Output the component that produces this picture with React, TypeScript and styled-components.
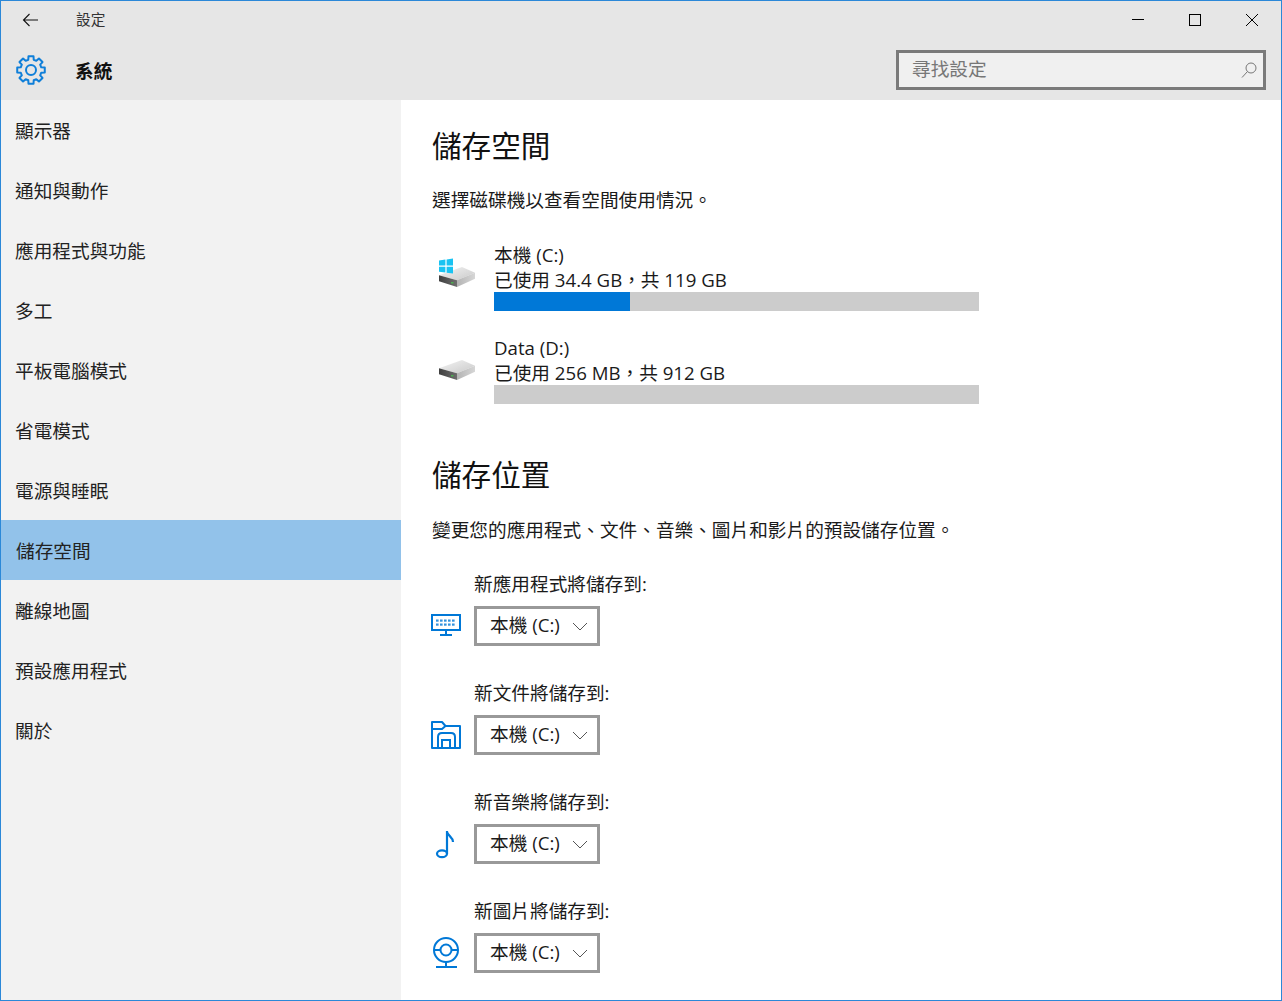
import React from "react";
import styled, { createGlobalStyle } from "styled-components";

const FONT = `"Open Sans", "Noto Sans CJK TC", sans-serif`;

const Global = createGlobalStyle`
  html, body { margin: 0; padding: 0; background: #fff; }
  * { box-sizing: border-box; }
`;

const Window = styled.div`
  width: 1282px; height: 1001px; border: 1px solid #2b88d8; overflow: hidden;
  display: flex; flex-direction: column; font-family: ${FONT}; font-size: 18.67px; color: #1a1a1a; background: #fff;
`;
const Header = styled.header`height: 99px; background: #e6e6e6; flex: none;`;
const TitleRow = styled.div`height: 37px; display: flex; align-items: center;`;
const BackButton = styled.div`width: 75px; padding-left: 21px; display: flex; align-items: center; height: 100%;`;
const AppTitle = styled.div`font-size: 14.67px; color: #333; flex: 1; padding-bottom: 2px;`;
const WinControls = styled.div`display: flex; height: 100%; margin-right: 1px;`;
const WinButton = styled.div`width: 57px; display: flex; align-items: center; justify-content: center;`;
const SearchRow = styled.div`height: 62px; padding: 2px 15px 0; display: flex; align-items: center;`;
const SectionTitle = styled.div`margin-left: 29px; font-weight: 700; font-size: 18.67px; color: #111; padding-bottom: 2px;`;
const SearchBox = styled.div`
  margin-left: auto; width: 370px; height: 40px; border: 3px solid #7a7a7a; background: #f0f0f0;
  display: flex; align-items: center; justify-content: space-between; padding: 0 6px 0 13px; color: #777;
`;
const SearchText = styled.span`padding-bottom: 5px;`;
const Body = styled.div`flex: 1; display: flex; min-height: 0;`;
const Sidebar = styled.nav`width: 400px; background: #f2f2f2; flex: none;`;
const NavItem = styled.div<{ $active?: boolean }>`
  height: 60px; display: flex; align-items: center; padding: 0 0 2px ${p => (p.$active ? 15 : 14)}px;
  background: ${p => (p.$active ? "#92c2ea" : "transparent")}; color: #222;
`;
const Main = styled.main`flex: 1; padding: 26px 0 0 31px; overflow: hidden;`;
const H1 = styled.h1<{ $top?: number }>`
  margin: ${p => p.$top ?? 0}px 0 0; font-size: 29.6px; font-weight: 400; line-height: 40px; color: #111;
`;
const Desc = styled.p<{ $top: number }>`margin: ${p => p.$top}px 0 0; line-height: 24px;`;
const DriveList = styled.div`margin-top: 32px; display: flex; flex-direction: column; gap: 26px;`;
const Drive = styled.div`display: grid; grid-template-columns: 62px 485px;`;
const DriveIconCell = styled.div`padding: 12px 0 0 7px;`;
const DriveName = styled.div`height: 24px; line-height: 22px; white-space: nowrap;`;
const Line = styled.div`line-height: 24px; white-space: nowrap;`;
const Track = styled.div`height: 19px; background: #cccccc;`;
const Fill = styled.div`height: 100%; background: #0078d7;`;
const Pickers = styled.div`margin-top: 30px; display: flex; flex-direction: column; gap: 35px;`;
const Picker = styled.div`display: grid; grid-template-columns: 42px auto; justify-content: start; row-gap: 10px;`;
const PickerLabel = styled.div`grid-column: 2; line-height: 24px;`;
const PickerIcon = styled.div`display: flex; align-items: center; margin-left: -1px;`;
const Select = styled.div`
  width: 126px; height: 40px; border: 3px solid #999; display: flex; align-items: center;
  justify-content: space-between; padding: 0 9px 0 13px; background: #fff; white-space: nowrap;
`;
const SelectText = styled.span`padding-bottom: 6px;`;
const ChevronMark = styled.svg`margin-top: 1px;`;

const Gear = () => {
  const teeth = 8, c = 15, ro = 14, ri = 10.6;
  let d = "";
  for (let i = 0; i < teeth; i++) {
    const a = (i * 2 * Math.PI) / teeth - Math.PI / 2;
    const w = Math.PI / teeth;
    const pts = [[ri, a - w * 0.66], [ro, a - w * 0.46], [ro, a + w * 0.46], [ri, a + w * 0.66]];
    pts.forEach(([r, t], j) => {
      d += `${i === 0 && j === 0 ? "M" : "L"}${(c + r * Math.cos(t)).toFixed(2)} ${(c + r * Math.sin(t)).toFixed(2)}`;
    });
  }
  return (
    <svg width="30" height="30" viewBox="0 0 30 30" fill="none" stroke="#0f7fd9" strokeWidth="2" strokeLinejoin="round">
      <path d={d + "Z"} />
      <circle cx="15" cy="15" r="5" />
    </svg>
  );
};

const DriveGraphic = ({ windows }: { windows?: boolean }) => (
  <svg width="38" height="33" viewBox="0 0 38 33" style={{ display: "block" }}>
    <defs>
      <linearGradient id="driveTop" x1="0" y1="0" x2="1" y2="1">
        <stop offset="0" stopColor="#f4f4f4" />
        <stop offset="1" stopColor="#c9c9c9" />
      </linearGradient>
      <linearGradient id="driveFront" x1="0" y1="0" x2="1" y2="0">
        <stop offset="0" stopColor="#3f3f3f" />
        <stop offset="1" stopColor="#6e6e6e" />
      </linearGradient>
      <linearGradient id="driveSide" x1="0" y1="0" x2="1" y2="0">
        <stop offset="0" stopColor="#b4b4b4" />
        <stop offset="1" stopColor="#d6d6d6" />
      </linearGradient>
    </defs>
    <path d="M0 19.3 L23 11 L36 16.7 L18 24.3 Z" fill="url(#driveTop)" />
    <path d="M0 19.3 L18 24.3 L18 31 L0 25.3 Z" fill="url(#driveFront)" />
    <path d="M18 24.3 L36 16.7 L36 22.7 L18 31 Z" fill="url(#driveSide)" />
    <rect x="12" y="26" width="2.5" height="1.5" fill="#4caf50" />
    {windows && (
      <g fill="#19c3f2">
        <path d="M0 4.5 L6.4 3.6 L6.4 9.6 L0 9.6 Z" />
        <path d="M7.6 3.4 L14 2.5 L14 9.6 L7.6 9.6 Z" />
        <path d="M0 10.8 L6.4 10.8 L6.4 16.6 L0 15.8 Z" />
        <path d="M7.6 10.8 L14 10.8 L14 17.6 L7.6 16.8 Z" />
      </g>
    )}
  </svg>
);

const Chevron = () => (
  <ChevronMark width="16" height="9" viewBox="0 0 16 9" fill="none" stroke="#555" strokeWidth="1"><path d="M1 1 L8 8 L15 1" /></ChevronMark>
);

const BLUE = "#0078d7";
const iconProps = { width: 32, height: 32, viewBox: "0 0 32 32", fill: "none", stroke: BLUE, strokeWidth: 2 };

const DesktopIcon = () => (
  <svg {...iconProps}>
    <rect x="1" y="5" width="28" height="15" />
    <path d="M15 20 V25 M9 25 H21" />
    <g fill={BLUE} stroke="none" opacity=".8">
      {[5, 9, 13, 17, 21].map(x => (
        <React.Fragment key={x}>
          <rect x={x} y="9.5" width="2.6" height="2.2" />
          <rect x={x} y="13.5" width="2.6" height="2.2" />
        </React.Fragment>
      ))}
    </g>
  </svg>
);
const FolderIcon = () => (
  <svg {...iconProps}>
    <path d="M1 29 V3 H11 L14.5 7 H29 V29 H24 V18 Q24 14 20 14 H11 Q7 14 7 18 V29 Z" strokeLinejoin="round" />
    <path d="M1 10 H11 L14.5 7 M11 29 V21 H19 V29 M7 29 H24" />
  </svg>
);
const NoteIcon = () => (
  <svg {...iconProps} strokeWidth="2.2">
    <ellipse cx="11" cy="25.7" rx="5" ry="3.4" />
    <path d="M16 26 V3 M16 4 C17 8 22 9 22 14" />
  </svg>
);
const WebcamIcon = () => (
  <svg {...iconProps}>
    <circle cx="15" cy="13" r="12" />
    <circle cx="15" cy="13" r="5.5" />
    <path d="M3 13 H9.5 M20.5 13 H27 M15 25 V29 M5 30 H26" />
  </svg>
);

const nav = ["顯示器", "通知與動作", "應用程式與功能", "多工", "平板電腦模式", "省電模式", "電源與睡眠", "儲存空間", "離線地圖", "預設應用程式", "關於"];
const drives = [
  { name: "本機 (C:)", used: "已使用 34.4 GB，共 119 GB", width: 136, windows: true },
  { name: "Data (D:)", used: "已使用 256 MB，共 912 GB", width: 0, windows: false },
];
const pickers = [
  { label: "新應用程式將儲存到:", Icon: DesktopIcon },
  { label: "新文件將儲存到:", Icon: FolderIcon },
  { label: "新音樂將儲存到:", Icon: NoteIcon },
  { label: "新圖片將儲存到:", Icon: WebcamIcon },
];

export default function App() {
  return (
    <Window>
      <Global />
      <Header>
        <TitleRow>
          <BackButton>
            <svg width="17" height="14" viewBox="0 0 17 14" fill="none" stroke="#111" strokeWidth="1.1"><path d="M16 7 H1.5 M7.5 1 L1.5 7 L7.5 13" /></svg>
          </BackButton>
          <AppTitle>設定</AppTitle>
          <WinControls>
            <WinButton><svg width="12" height="12" viewBox="0 0 12 12" stroke="#000" strokeWidth="1"><path d="M0 5.5 H12" /></svg></WinButton>
            <WinButton><svg width="12" height="12" viewBox="0 0 12 12" fill="none" stroke="#000" strokeWidth="1"><rect x=".5" y=".5" width="11" height="11" /></svg></WinButton>
            <WinButton><svg width="12" height="12" viewBox="0 0 12 12" stroke="#000" strokeWidth="1"><path d="M0 0 L12 12 M12 0 L0 12" /></svg></WinButton>
          </WinControls>
        </TitleRow>
        <SearchRow>
          <Gear />
          <SectionTitle>系統</SectionTitle>
          <SearchBox>
            <SearchText>尋找設定</SearchText>
            <svg width="16" height="17" viewBox="0 0 16 17" fill="none" stroke="#777" strokeWidth="1"><circle cx="10" cy="6" r="5" /><path d="M6.5 9.5 L1 15.5" /></svg>
          </SearchBox>
        </SearchRow>
      </Header>
      <Body>
        <Sidebar>
          {nav.map(n => <NavItem key={n} $active={n === "儲存空間"}>{n}</NavItem>)}
        </Sidebar>
        <Main>
          <H1>儲存空間</H1>
          <Desc $top={22}>選擇磁碟機以查看空間使用情況。</Desc>
          <DriveList>
            {drives.map(d => (
              <Drive key={d.name}>
                <DriveIconCell><DriveGraphic windows={d.windows} /></DriveIconCell>
                <div>
                  <DriveName>{d.name}</DriveName>
                  <Line>{d.used}</Line>
                  <Track><Fill style={{ width: d.width }} /></Track>
                </div>
              </Drive>
            ))}
          </DriveList>
          <H1 $top={51}>儲存位置</H1>
          <Desc $top={23}>變更您的應用程式、文件、音樂、圖片和影片的預設儲存位置。</Desc>
          <Pickers>
            {pickers.map(({ label, Icon }) => (
              <Picker key={label}>
                <PickerLabel>{label}</PickerLabel>
                <PickerIcon><Icon /></PickerIcon>
                <Select><SelectText>本機 (C:)</SelectText><Chevron /></Select>
              </Picker>
            ))}
          </Pickers>
        </Main>
      </Body>
    </Window>
  );
}
